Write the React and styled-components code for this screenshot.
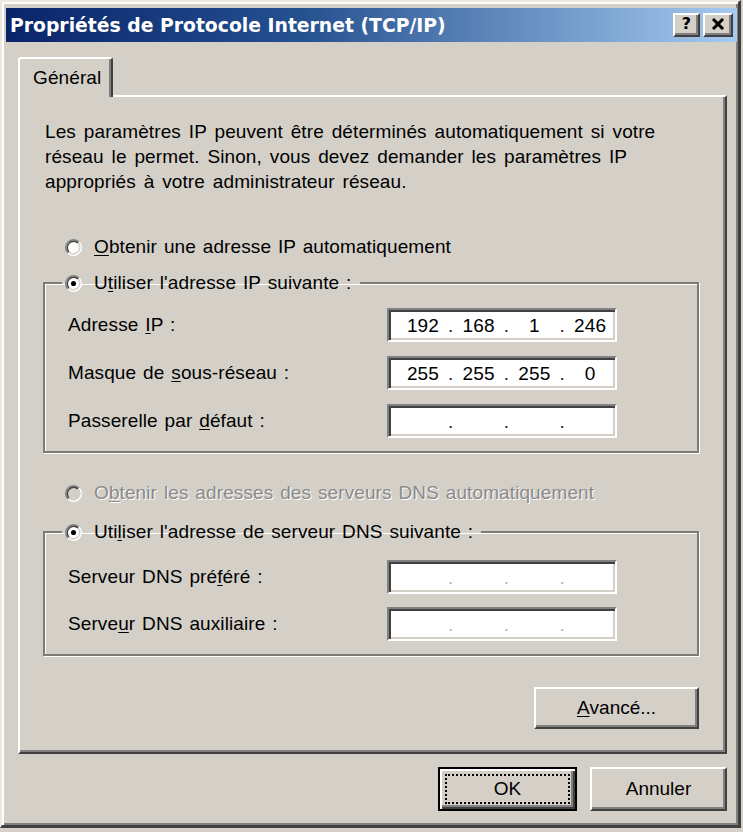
import React from "react";
import styled, { createGlobalStyle } from "styled-components";

const GlobalStyle = createGlobalStyle`
  body {
    margin: 0;
    background: #d4d0c8;
    font-family: "Liberation Sans", Arial, sans-serif;
  }
`;

/* ---------- window frame ---------- */
const Window = styled.div`
  box-sizing: border-box;
  width: 741px;
  height: 828px;
  background: #d4d0c8;
  border-style: solid;
  border-width: 2px 3px 3px 2px;
  border-color: #ece9e2 #404040 #404040 #ece9e2;
  box-shadow: inset 2px 2px 0 #fff, inset -2px -2px 0 #808080;
  padding: 6px 1px 0 4px;
  display: flex;
  flex-direction: column;
  color: #000;
  font-size: 19px;
  letter-spacing: 0.1px;
  word-spacing: 1.5px;
`;

const TitleBar = styled.div`
  height: 34px;
  display: flex;
  align-items: center;
  justify-content: space-between;
  padding: 0 4px;
  background: linear-gradient(90deg, #0a246a 0%, #24508f 40%, #a6caf0 100%);
`;

const Title = styled.span`
  font-family: "DejaVu Sans", Verdana, sans-serif;
  font-weight: bold;
  font-size: 18.8px;
  letter-spacing: 0;
  word-spacing: 0;
  color: #fff;
  white-space: nowrap;
`;

const TitleButtons = styled.div`
  display: flex;
  gap: 3px;
`;

const CaptionButton = styled.div`
  box-sizing: border-box;
  width: ${(p) => p.$w}px;
  height: 24px;
  background: #d4d0c8;
  border: 2px solid;
  border-color: #fff #404040 #404040 #fff;
  box-shadow: inset -2px -2px 0 #808080;
  display: flex;
  align-items: center;
  justify-content: center;
  font-family: "DejaVu Sans", sans-serif;
  font-weight: bold;
  font-size: 16px;
  line-height: 1;
  padding-bottom: 2px;
`;

/* ---------- body ---------- */
const Body = styled.div`
  display: flex;
  flex-direction: column;
  padding: 15px 10px 0 12px;
`;

const TabRow = styled.div`
  display: flex;
`;

const Tab = styled.div`
  box-sizing: border-box;
  position: relative;
  z-index: 1;
  width: 95px;
  height: 40px;
  margin-bottom: -2px;
  background: #d4d0c8;
  border-style: solid;
  border-width: 2px 2px 0 2px;
  border-color: #fff #404040 transparent #fff;
  border-radius: 3px 3px 0 0;
  box-shadow: inset -2px 0 0 #808080;
  display: flex;
  align-items: center;
  padding-left: 13px;
`;

const Panel = styled.div`
  box-sizing: border-box;
  border: 2px solid;
  border-color: #fff #404040 #404040 #fff;
  box-shadow: inset -2px -2px 0 #808080;
  padding: 22px 26px 23px 23px;
  display: flex;
  flex-direction: column;
`;

const Intro = styled.p`
  margin: 0 0 0 2px;
  line-height: 25px;
  white-space: nowrap;
  word-spacing: 2.5px;
`;

const RadioRow = styled.div`
  height: 30px;
  display: flex;
  align-items: center;
  gap: 12px;
  margin-top: ${(p) => p.$top || 0}px;
  margin-left: ${(p) => (p.$inLegend ? 0 : 22)}px;
  color: ${(p) => (p.$disabled ? "#8a8a8a" : "#000")};
  text-shadow: ${(p) => (p.$disabled ? "1px 1px 0 #fff" : "none")};
  white-space: nowrap;
`;

const Group = styled.fieldset`
  margin: ${(p) => p.$top}px 0 0 0;
  padding: ${(p) => p.$padTop}px 20px 13px 23px;
  border: 2px solid #7e7b75;
  box-shadow: inset 1px 1px 0 #fff, 1px 1px 0 #fff;
  min-width: 0;
`;

const Legend = styled.legend`
  margin-left: -6px;
  padding: 0 8px 0 3px;
`;

const FieldGrid = styled.div`
  display: grid;
  grid-template-columns: 319px 230px;
  row-gap: ${(p) => p.$gap}px;
  align-items: center;
`;

const Label = styled.span`
  white-space: nowrap;
`;

const Key = styled.u`
  text-underline-offset: 2px;
`;

const IpBox = styled.div`
  box-sizing: border-box;
  width: 230px;
  height: 34px;
  background: #fff;
  border: 2px solid;
  border-color: #808080 #fff #fff #808080;
  box-shadow: inset 2px 2px 0 #404040, inset -2px -2px 0 #d4d0c8;
  display: flex;
  align-items: center;
  padding-left: 9px;
  padding-top: 2px;
`;

const Octet = styled.span`
  width: 50px;
  text-align: center;
`;

const Dot = styled.span`
  width: 6px;
  text-align: center;
  color: ${(p) => (p.$faint ? "#b4b4b4" : "#202020")};
`;

const Button = styled.button`
  box-sizing: border-box;
  width: ${(p) => p.$w}px;
  height: ${(p) => p.$h}px;
  margin: 0;
  padding: ${(p) => (p.$default ? "5px" : "0")};
  background: #d4d0c8;
  font-family: "Liberation Sans", Arial, sans-serif;
  font-size: 19px;
  color: #000;
  display: flex;
  align-items: stretch;
  border: 2px solid;
  border-color: ${(p) =>
    p.$default ? "#000" : "#fff #404040 #404040 #fff"};
  box-shadow: ${(p) =>
    p.$default
      ? "inset 2px 2px 0 #fff, inset -2px -2px 0 #404040, inset -4px -4px 0 #808080"
      : "inset -2px -2px 0 #808080"};
`;

const ButtonFace = styled.span`
  flex: 1;
  display: flex;
  align-items: center;
  justify-content: center;
  border: 2px dotted ${(p) => (p.$focus ? "#000" : "transparent")};
`;

const AdvancedRow = styled.div`
  display: flex;
  justify-content: flex-end;
  margin-top: 31px;
`;

const Footer = styled.div`
  display: flex;
  justify-content: flex-end;
  gap: 13px;
  margin-top: 13px;
`;

/* ---------- drawings ---------- */
const RadioIcon = ({ checked, disabled }) => (
  <svg width="17" height="17" viewBox="0 0 12 12" style={{ flex: "none" }}>
    <circle cx="6" cy="6" r="5" fill={disabled ? "#d4d0c8" : "#fff"} />
    <path d="M2.11 9.89 A5.5 5.5 0 0 1 9.89 2.11" fill="none" stroke="#808080" strokeWidth="1" />
    <path d="M9.89 2.11 A5.5 5.5 0 0 1 2.11 9.89" fill="none" stroke="#fff" strokeWidth="1" />
    <path d="M2.82 9.18 A4.5 4.5 0 0 1 9.18 2.82" fill="none" stroke="#404040" strokeWidth="1" />
    <path d="M9.18 2.82 A4.5 4.5 0 0 1 2.82 9.18" fill="none" stroke="#d4d0c8" strokeWidth="1" />
    {checked && <circle cx="6" cy="6" r="1.8" fill="#000" />}
  </svg>
);

const CloseGlyph = () => (
  <svg width="14" height="12" viewBox="0 0 14 12">
    <path d="M2 1 L12 11 M12 1 L2 11" stroke="#000" strokeWidth="3" />
  </svg>
);

const IpField = ({ value, faint }) => {
  const parts = value || ["", "", "", ""];
  return (
    <IpBox>
      {parts.map((p, i) => (
        <React.Fragment key={i}>
          <Octet>{p}</Octet>
          {i < 3 && <Dot $faint={faint}>.</Dot>}
        </React.Fragment>
      ))}
    </IpBox>
  );
};

export default function App() {
  return (
    <>
      <GlobalStyle />
      <Window>
        <TitleBar>
          <Title>Propriétés de Protocole Internet (TCP/IP)</Title>
          <TitleButtons>
            <CaptionButton $w={27}>?</CaptionButton>
            <CaptionButton $w={30}>
              <CloseGlyph />
            </CaptionButton>
          </TitleButtons>
        </TitleBar>

        <Body>
          <TabRow>
            <Tab>Général</Tab>
          </TabRow>
          <Panel>
            <Intro>
              Les paramètres IP peuvent être déterminés automatiquement si votre
              <br />
              réseau le permet. Sinon, vous devez demander les paramètres IP
              <br />
              appropriés à votre administrateur réseau.
            </Intro>

            <RadioRow $top={38}>
              <RadioIcon />
              <span>
                <Key>O</Key>btenir une adresse IP automatiquement
              </span>
            </RadioRow>

            <Group $top={6} $padTop={10}>
              <Legend>
                <RadioRow $inLegend>
                  <RadioIcon checked />
                  <span>
                    U<Key>t</Key>iliser l'adresse IP suivante :
                  </span>
                </RadioRow>
              </Legend>
              <FieldGrid $gap={14}>
                <Label>
                  Adresse <Key>I</Key>P :
                </Label>
                <IpField value={["192", "168", "1", "246"]} />
                <Label>
                  Masque de <Key>s</Key>ous-réseau :
                </Label>
                <IpField value={["255", "255", "255", "0"]} />
                <Label>
                  Passerelle par <Key>d</Key>éfaut :
                </Label>
                <IpField />
              </FieldGrid>
            </Group>

            <RadioRow $top={25} $disabled>
              <RadioIcon disabled />
              <span>
                O<Key>b</Key>tenir les adresses des serveurs DNS automatiquement
              </span>
            </RadioRow>

            <Group $top={9} $padTop={13}>
              <Legend>
                <RadioRow $inLegend>
                  <RadioIcon checked />
                  <span>
                    Uti<Key>l</Key>iser l'adresse de serveur DNS suivante :
                  </span>
                </RadioRow>
              </Legend>
              <FieldGrid $gap={13}>
                <Label>
                  Serveur DNS pré<Key>f</Key>éré :
                </Label>
                <IpField faint />
                <Label>
                  Serve<Key>u</Key>r DNS auxiliaire :
                </Label>
                <IpField faint />
              </FieldGrid>
            </Group>

            <AdvancedRow>
              <Button $w={165} $h={42}>
                <ButtonFace>
                  <Key>A</Key>vancé...
                </ButtonFace>
              </Button>
            </AdvancedRow>
          </Panel>

          <Footer>
            <Button $w={139} $h={44} $default>
              <ButtonFace $focus>OK</ButtonFace>
            </Button>
            <Button $w={137} $h={44}>
              <ButtonFace>Annuler</ButtonFace>
            </Button>
          </Footer>
        </Body>
      </Window>
    </>
  );
}
